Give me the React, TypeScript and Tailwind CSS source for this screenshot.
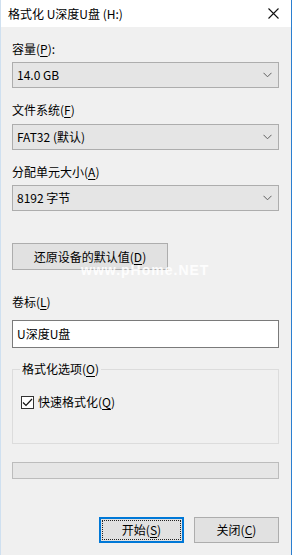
import React from 'react';

const font = { fontFamily: '"Noto Sans CJK SC", "Noto Sans", sans-serif' };

function Chevron() {
  return (
    <svg width="9" height="6" viewBox="0 0 9 6" className="shrink-0">
      <path d="M0.5 0.8 L4.5 4.8 L8.5 0.8" fill="none" stroke="#606060" strokeWidth="1" />
    </svg>
  );
}

function Select({ value }: { value: string }) {
  return (
    <div className="flex h-[26px] items-center justify-between border border-[#adadad] bg-[#e5e5e5] pl-[4px] pr-[6px] text-[12px] text-black">
      <span>{value}</span>
      <Chevron />
    </div>
  );
}

function Label({ text, k, tail }: { text: string; k: string; tail?: string }) {
  return (
    <div className="h-[16px] text-[12px] leading-[16px] text-black">
      {text}(<span className="underline underline-offset-2">{k}</span>){tail}
    </div>
  );
}

export default function App() {
  return (
    <div style={font} className="flex h-[555px] w-[295px] bg-white">
      <div className="flex h-full w-[292px] flex-col border-l border-r border-[#cfe0f0] border-r-[#2b7fd0] bg-[#f0f0f0]">
        {/* title bar */}
        <div className="flex h-[27px] shrink-0 items-center justify-between bg-white pl-[7px] pr-[12px]">
          <span className="text-[12px] text-black">格式化 U深度U盘 (H:)</span>
          <svg width="11" height="11" viewBox="0 0 11 11">
            <path d="M0.5 0.5 L10.5 10.5 M10.5 0.5 L0.5 10.5" stroke="#111" strokeWidth="1.1" />
          </svg>
        </div>

        <div className="flex flex-1 flex-col pl-[11px] pr-[12px]">
          <div className="mt-[14px]">
            <Label text="容量" k="P" tail=":" />
          </div>
          <div className="mt-[5px]">
            <Select value="14.0 GB" />
          </div>

          <div className="mt-[14px]">
            <Label text="文件系统" k="F" />
          </div>
          <div className="mt-[6px]">
            <Select value="FAT32 (默认)" />
          </div>

          <div className="mt-[14px]">
            <Label text="分配单元大小" k="A" />
          </div>
          <div className="mt-[5px]">
            <Select value="8192 字节" />
          </div>

          <div className="relative mt-[32px]">
            <button className="flex h-[27px] w-[156px] items-center justify-center border border-[#adadad] bg-[#e1e1e1] text-[12px] text-black">
              还原设备的默认值(<span className="underline underline-offset-2">D</span>)
            </button>
            {/* watermark */}
            <span className="pointer-events-none absolute left-[69px] top-[19px] text-[14px] leading-[16px] font-bold tracking-[1px] text-white/85" style={{ fontFamily: '"Liberation Sans", sans-serif' }}>
              www.pHome.NET
            </span>
          </div>

          <div className="mt-[24px]">
            <Label text="卷标" k="L" />
          </div>
          <div className="mt-[10px] flex h-[28px] items-center border border-[#7a7a7a] bg-white pl-[4px] text-[12px] text-black">
            U深度U盘
          </div>

          {/* group box */}
          <div className="relative mt-[21px] h-[75px] border border-[#dcdcdc]">
            <span className="absolute left-[7px] top-[-9px] bg-[#f0f0f0] px-[2px] text-[12px] leading-[16px] text-black">
              格式化选项(<span className="underline underline-offset-2">O</span>)
            </span>
            <div className="mt-[24px] flex items-center pl-[8px]">
              <div className="flex h-[13px] w-[13px] items-center justify-center border border-[#333] bg-white">
                <svg width="11" height="9" viewBox="0 0 11 9">
                  <path d="M1 4.5 L4 7.5 L10 1" fill="none" stroke="#111" strokeWidth="1.2" />
                </svg>
              </div>
              <span className="ml-[4px] text-[12px] leading-[16px] text-black">
                快速格式化(<span className="underline underline-offset-2">Q</span>)
              </span>
            </div>
          </div>

          <div className="mt-[18px] h-[17px] border border-[#bcbcbc] bg-[#e6e6e6]" />

          <div className="mt-[38px] flex justify-end gap-[10px]">
            <button className="flex h-[26px] w-[85px] items-center justify-center border-2 border-[#0078d7] bg-[#e1e1e1] p-[1px] text-[12px] text-black">
              <span className="flex h-full w-full items-center justify-center border border-dotted border-[#222]">
                开始(<span className="underline underline-offset-2">S</span>)
              </span>
            </button>
            <button className="flex h-[26px] w-[85px] items-center justify-center border border-[#adadad] bg-[#e1e1e1] text-[12px] text-black">
              关闭(<span className="underline underline-offset-2">C</span>)
            </button>
          </div>
        </div>
      </div>
    </div>
  );
}
